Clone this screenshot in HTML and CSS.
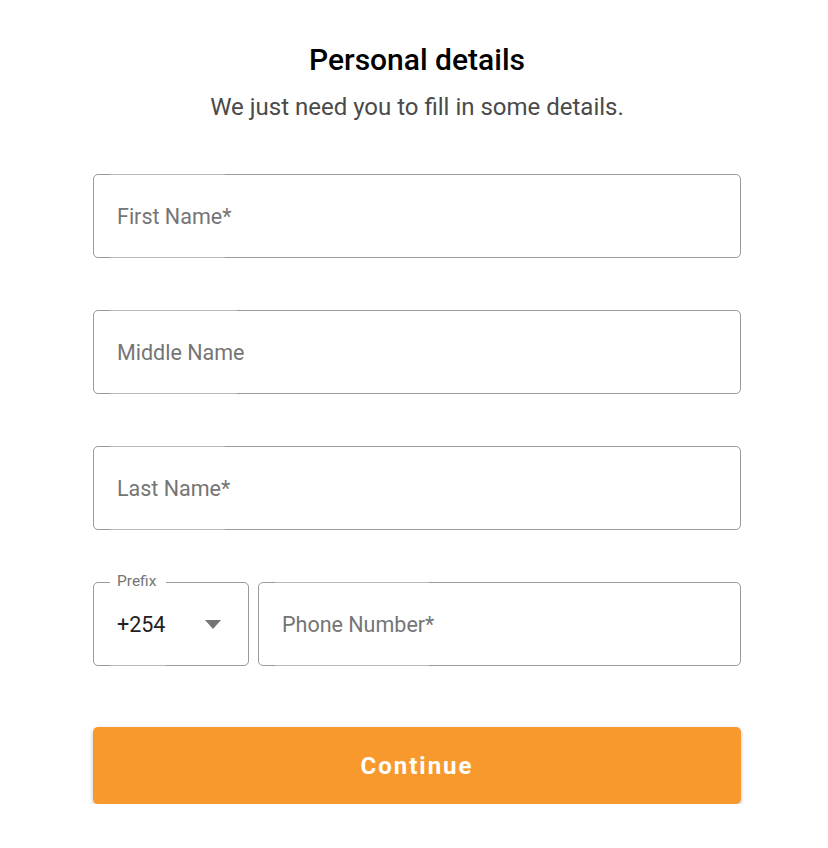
FILE: index.html
```html
<!DOCTYPE html>
<html>
<head>
<meta charset="utf-8">
<link rel="stylesheet" href="styles.css">
</head>
<body>
<main class="page">
  <h1 class="title">Personal details</h1>
  <p class="subtitle">We just need you to fill in some details.</p>
  <form class="form">
    <div class="field"><span class="placeholder">First Name*</span><i class="notch notch-fn"></i></div>
    <div class="field"><span class="placeholder">Middle Name</span><i class="notch notch-mn"></i></div>
    <div class="field"><span class="placeholder">Last Name*</span><i class="notch notch-ln"></i></div>
    <div class="phone-row">
      <div class="field prefix">
        <span class="legend">Prefix</span>
        <span class="value">+254</span>
        <svg class="caret" width="16" height="10" viewBox="0 0 16 10"><path d="M0 0H16L8 9Z" fill="#757575"/></svg>
        <i class="notch notch-px"></i>
      </div>
      <div class="field phone"><span class="placeholder">Phone Number*</span><i class="notch notch-ph"></i></div>
    </div>
    <button type="button" class="btn">Continue</button>
  </form>
</main>
</body>
</html>
```
FILE: styles.css
```css
html, body {
  margin: 0;
  padding: 0;
  background: #fff;
}
body {
  font-family: Roboto, "Liberation Sans", Arial, sans-serif;
}
.page {
  width: 648px;
  margin-left: 93px;
  padding-top: 40px;
}
.title {
  margin: 0;
  text-align: center;
  font-size: 30px;
  font-weight: 500;
  line-height: 40px;
  color: #000;
}
.subtitle {
  margin: 11px 0 0;
  text-align: center;
  font-size: 24px;
  line-height: 32px;
  color: #4a4a4a;
}
.form {
  margin-top: 51px;
  display: flex;
  flex-direction: column;
  gap: 52px;
}
.field {
  position: relative;
  box-sizing: border-box;
  height: 84px;
  border: 1px solid #9a9a9a;
  border-radius: 5px;
  display: flex;
  align-items: center;
  padding: 0 23px;
}
.placeholder {
  font-size: 21.5px;
  color: #757575;
}
.notch {
  position: absolute;
  left: 16px;
  top: -1px;
  height: 82px;
  border-top: 1px solid #b8b8b8;
  border-bottom: 1px solid #b8b8b8;
}
.notch-fn { width: 115px; }
.notch-mn { width: 127px; }
.notch-ln { width: 115px; }
.notch-ph { width: 154px; }
.notch-px { width: 56px; border-top-color: #fff; }
.phone-row {
  display: flex;
  gap: 9px;
}
.prefix {
  width: 156px;
  flex: none;
  justify-content: space-between;
  padding-right: 27px;
}
.phone {
  flex: 1;
}
.legend {
  position: absolute;
  left: 19px;
  top: -11px;
  padding: 0 4px;
  background: #fff;
  font-size: 15.5px;
  line-height: 18px;
  color: #757575;
  z-index: 1;
}
.value {
  font-size: 21.5px;
  color: #222;
}
.caret {
  display: block;
  margin-top: 2px;
}
.btn {
  margin-top: 9px;
  height: 77px;
  border: none;
  border-radius: 5px;
  background: #f8992e;
  color: #fff;
  font-family: Roboto, "Liberation Sans", Arial, sans-serif;
  font-size: 24px;
  font-weight: 700;
  letter-spacing: 2px;
  box-shadow: 0 2px 4px rgba(0,0,0,0.25);
  cursor: pointer;
}
```
